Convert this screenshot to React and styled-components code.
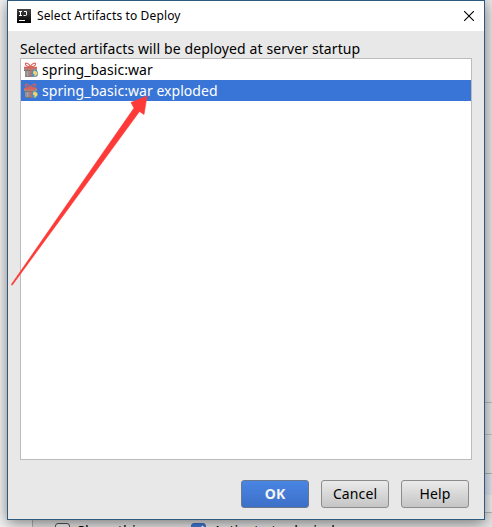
import React from "react";
import styled, { createGlobalStyle } from "styled-components";

const GlobalStyle = createGlobalStyle`
  * { box-sizing: border-box; }
  body { margin: 0; overflow: hidden; font-family: "Noto Sans", "Open Sans", sans-serif; }
`;

const Screen = styled.div`
  position: relative;
  width: 492px;
  height: 527px;
  overflow: hidden;
  display: flex;
  background: #f5f5f5;
`;

const SidePane = styled.div`
  width: 33px;
  border-right: 1px solid #b4b4b4;
`;

const Backdrop = styled.div`
  flex: 1;
  display: flex;
  flex-direction: column;
  background: #ebebeb;
`;

const Band = styled.div`
  height: ${(p) => p.$height}px;
  flex: none;
  background: ${(p) => p.$color || "#e9e9e9"};
  border-bottom: 1px solid ${(p) => p.$line || "transparent"};
`;

const OptionRow = styled.div`
  display: flex;
  align-items: flex-start;
  height: 14px;
  padding: 10px 0 0 22px;
  overflow: hidden;
  background: #e8e8e8;
`;

const Option = styled.div`
  display: flex;
  flex: none;
  gap: 7px;
  width: 136px;
  font-size: 14.5px;
  line-height: 14px;
  letter-spacing: 0.05px;
  white-space: nowrap;
  color: #000;
`;

const Box = styled.span`
  width: 15px;
  height: 15px;
  flex: none;
  display: flex;
  border: 1px solid ${(p) => (p.$checked ? "#3a70c8" : "#555")};
  border-radius: 3px;
  background: ${(p) => (p.$checked ? "#3f7bd8" : "#f4f4f4")};
`;

const Dialog = styled.section`
  position: absolute;
  left: 7px;
  top: 0;
  width: 478px;
  height: 520px;
  display: flex;
  flex-direction: column;
  border: 1px solid #2b5c80;
  background: #e8e8e8;
  box-shadow: 0 3px 14px rgba(0, 0, 0, 0.5);
`;

const TitleBar = styled.header`
  display: flex;
  align-items: center;
  height: 30px;
  flex: none;
  padding: 0 10px 0 9px;
  background: #fff;
`;

const Title = styled.h1`
  flex: 1;
  margin: 0 0 0 6px;
  font-size: 12px;
  font-weight: 400;
  line-height: 18px;
  letter-spacing: 0.13px;
  color: #000;
`;

const CloseButton = styled.button`
  display: flex;
  padding: 0;
  border: 0;
  background: none;
`;

const Body = styled.div`
  flex: 1;
  display: flex;
  flex-direction: column;
  padding: 7px 12px 11px;
`;

const Prompt = styled.p`
  margin: 0;
  height: 20px;
  font-size: 14px;
  line-height: 21px;
  letter-spacing: 0.1px;
  white-space: nowrap;
  color: #000;
`;

const List = styled.ul`
  height: 402px;
  width: 452px;
  margin: 0;
  padding: 0;
  list-style: none;
  border: 1px solid #bcbcbc;
  background: #fff;
`;

const Item = styled.li`
  display: flex;
  align-items: center;
  height: 21px;
  padding-left: 2px;
  gap: 3px;
  font-size: 14px;
  line-height: 21px;
  letter-spacing: 0.04px;
  color: ${(p) => (p.$selected ? "#fff" : "#000")};
  background: ${(p) => (p.$selected ? "#3875d7" : "#fff")};
`;

const Actions = styled.footer`
  display: flex;
  justify-content: flex-end;
  gap: 12px;
  margin-top: 20px;
  padding-right: 3px;
`;

const Button = styled.button`
  width: 68px;
  height: 28px;
  padding: 0;
  border: 1px solid ${(p) => (p.$primary ? "#69788c" : "#8c8c8c")};
  border-radius: 3px;
  background: ${(p) =>
    p.$primary
      ? "linear-gradient(#4985e3, #3c70c8)"
      : "linear-gradient(#eaeaea, #c5c5c5)"};
  color: ${(p) => (p.$primary ? "#f4f4f4" : "#000")};
  font-family: inherit;
  font-size: 14px;
  font-weight: ${(p) => (p.$primary ? 700 : 400)};
  line-height: 24px;
  letter-spacing: 0.1px;
`;

const Pointer = styled.svg`
  position: absolute;
  left: 0;
  top: 90px;
  pointer-events: none;
`;

const AppIcon = () => (
  <svg width="14" height="14" viewBox="0 0 14 14">
    <defs>
      <linearGradient id="app" x2="0" y2="1">
        <stop stopColor="#444" />
        <stop offset="1" stopColor="#000" />
      </linearGradient>
    </defs>
    <rect width="14" height="14" fill="url(#app)" />
    <path d="M2 2.5h3M3.5 2.5v4M2 6.5h3M7 2.5h2.5v3.3q0 .7-.8.7H6.5M2 11.5h6" fill="none" stroke="#fff" />
  </svg>
);

const ArtifactIcon = () => (
  <svg width="16" height="16" viewBox="0 0 16 16">
    <path d="M1 5h13v3.5H1zM2 9h11v5.5H2z" fill="#99908d" />
    <path d="M1 8.5h13M2 14.3h11" stroke="#777473" />
    <path d="M4.5 9v5M10.5 9v5" stroke="#aaa5a3" />
    <path d="M7.5 4v10.5M1 5.5h13" stroke="#dc6259" strokeWidth="1.4" />
    <path d="M7.3 4.7C6 1 3 .6 2.4 1.8S4 4.7 7.3 4.7C9 1 12 .6 12.6 1.8S11 4.7 7.3 4.7M6 5 3.5 8M9 5l2.5 3" fill="none" stroke="#dc6259" strokeWidth="1.1" />
    <circle cx="11.6" cy="11.6" r="3.5" fill="#4f90c4" />
    <path d="M10.6 8.6l2.2.3 1.7 1.7-.2 2-1.6 1-.5 1.3-.9-.7.2-1.6-1.6-1z" fill="#f3d36b" />
  </svg>
);

const CloseIcon = () => (
  <svg width="10" height="10" viewBox="0 0 10 10">
    <path d="M0 0l10 10M10 0L0 10" stroke="#000" strokeWidth="1.1" />
  </svg>
);

const CheckMark = () => (
  <svg width="13" height="13" viewBox="0 0 13 13">
    <path d="M3 6l3 4 5-8" fill="none" stroke="#fff" strokeWidth="2" />
  </svg>
);

const artifacts = [
  { name: "spring_basic:war" },
  { name: "spring_basic:war exploded", selected: true },
];

export default function App() {
  return (
    <>
      <GlobalStyle />
      <Screen>
        <SidePane />
        <Backdrop>
          <Band $height={403} $line="#bdbdbd" />
          <Band $height={32} $line="#c6c6c6" />
          <Band $height={39} $line="#b5b5b5" />
          <Band $height={21} $color="#e4e8f2" />
          <Band $height={18} $color="#f2f2f2" $line="#bababa" />
          <OptionRow>
            <Option><Box />Show this page</Option>
            <Option><Box $checked><CheckMark /></Box>Activate tool window</Option>
          </OptionRow>
        </Backdrop>
        <Dialog>
          <TitleBar>
            <AppIcon />
            <Title>Select Artifacts to Deploy</Title>
            <CloseButton aria-label="Close"><CloseIcon /></CloseButton>
          </TitleBar>
          <Body>
            <Prompt>Selected artifacts will be deployed at server startup</Prompt>
            <List>
              {artifacts.map((a) => (
                <Item key={a.name} $selected={a.selected}>
                  <ArtifactIcon />
                  {a.name}
                </Item>
              ))}
            </List>
            <Actions>
              <Button $primary>OK</Button>
              <Button>Cancel</Button>
              <Button>Help</Button>
            </Actions>
          </Body>
        </Dialog>
        <Pointer width="160" height="200" viewBox="0 0 160 200">
          <path d="M147 6L144 24.5L139.5 21.5L12.2 195.2L11.3 194.5L134 18L131 12.5Z" fill="#fd3a38" stroke="#fd3a38" strokeWidth=".6" />
        </Pointer>
      </Screen>
    </>
  );
}
